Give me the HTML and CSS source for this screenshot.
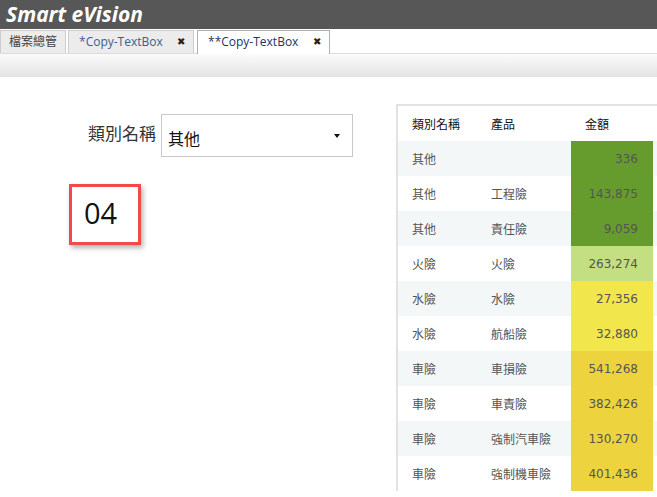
FILE: index.html
```html
<!DOCTYPE html>
<html>
<head>
    <title>Smart eVision</title>
    <link rel="stylesheet" href="styles.css">
</head>
<body>
    <div class="header">Smart eVision</div>
    <div class="tabs">
        <div class="tab">檔案總管</div>
        <div class="tab tab-doc">*Copy-TextBox <span class="close">&#10006;</span></div>
        <div class="tab tab-doc active">**Copy-TextBox <span class="close">&#10006;</span></div>
    </div>
    <div class="toolbar"></div>

    <div class="content">
        <div class="left">
            <div class="filter">
                <label class="filter-label">類別名稱</label>
                <div class="select">
                    <span>其他</span>
                    <span class="caret"></span>
                </div>
            </div>
            <div class="textbox">04</div>
        </div>

        <div class="grid">
            <table>
                <colgroup>
                    <col class="c1"><col class="c2"><col class="c3"><col class="c4">
                </colgroup>
                <thead>
                    <tr><th>類別名稱</th><th>產品</th><th>金額</th><th></th></tr>
                </thead>
                <tbody>
                    <tr><td>其他</td><td></td><td class="amt g1">336</td><td></td></tr>
                    <tr><td>其他</td><td>工程險</td><td class="amt g1">143,875</td><td></td></tr>
                    <tr><td>其他</td><td>責任險</td><td class="amt g1">9,059</td><td></td></tr>
                    <tr><td>火險</td><td>火險</td><td class="amt g2">263,274</td><td></td></tr>
                    <tr><td>水險</td><td>水險</td><td class="amt g3">27,356</td><td></td></tr>
                    <tr><td>水險</td><td>航船險</td><td class="amt g3">32,880</td><td></td></tr>
                    <tr><td>車險</td><td>車損險</td><td class="amt g4">541,268</td><td></td></tr>
                    <tr><td>車險</td><td>車責險</td><td class="amt g4">382,426</td><td></td></tr>
                    <tr><td>車險</td><td>強制汽車險</td><td class="amt g4">130,270</td><td></td></tr>
                    <tr><td>車險</td><td>強制機車險</td><td class="amt g4">401,436</td><td></td></tr>
                </tbody>
            </table>
        </div>
    </div>
</body>
</html>
```

FILE: styles.css
```css
html, body {
    margin: 0;
    height: 100%;
    overflow: hidden;
}
body {
    font-family: "Open Sans", "Noto Sans CJK TC", sans-serif;
    background-color: white;
    color: #333;
}
.header {
    height: 29px;
    line-height: 29px;
    background-color: #575757;
    color: white;
    font-size: 21px;
    font-weight: bold;
    font-style: italic;
    padding-left: 6px;
}
.tabs {
    display: flex;
    align-items: flex-end;
    height: 24px;
    border-bottom: 1px solid #dcdcdc;
}
.tab {
    box-sizing: border-box;
    height: 23px;
    line-height: 21px;
    font-size: 12px;
    padding: 0 8px;
    margin-right: 2px;
    background: #ececec;
    border: 1px solid #cdcdcd;
    border-bottom: none;
    color: #444;
}
.tab-doc {
    display: flex;
    color: #3a5f8c;
    padding: 0 8px 0 10px;
}
.tab:nth-child(2) {
    width: 126px;
}
.tab.active {
    background: white;
    border-color: #b0b0b0;
    color: #1c3560;
    width: 133px;
    margin-left: 1px;
    height: 24px;
    margin-bottom: -1px;
}
.close {
    margin-left: auto;
    font-size: 10px;
    color: #222;
}
.toolbar {
    height: 23px;
    background: linear-gradient(#fbfbfb, #e3e3e3);
}
.content {
    display: flex;
    align-items: flex-start;
}
.left {
    width: 396px;
    flex-shrink: 0;
}
.filter {
    display: flex;
    margin: 37px 0 0 88px;
}
.filter-label {
    font-size: 17px;
    color: #333;
    padding-top: 6px;
    margin-right: 5px;
    width: 68px;
    white-space: nowrap;
}
.select {
    box-sizing: border-box;
    width: 192px;
    height: 43px;
    border: 1px solid #c8c8c8;
    display: flex;
    align-items: center;
    padding: 4px 12px 0 6px;
    font-size: 16px;
    color: #111;
}
.caret {
    margin-left: auto;
    width: 0;
    height: 0;
    border-left: 3px solid transparent;
    border-right: 3px solid transparent;
    border-top: 4px solid #111;
    margin-top: -4px;
}
.textbox {
    box-sizing: border-box;
    width: 72px;
    height: 61px;
    margin: 27px 0 0 69px;
    border: 3px solid #f24a4a;
    box-shadow: 2px 3px 5px rgba(0, 0, 0, 0.3);
    font-size: 29px;
    color: #111;
    padding: 7px 0 0 12px;
    line-height: 38px;
}
.grid {
    margin-top: 27px;
    border-top: 2px solid #e2e2e2;
    border-left: 2px solid #e2e2e2;
}
table {
    border-collapse: collapse;
    table-layout: fixed;
    width: 259px;
    font-size: 12px;
}
.c1 { width: 79px; }
.c2 { width: 94px; }
.c3 { width: 82px; }
.c4 { width: 4px; }
th, td {
    height: 35px;
    padding: 0 0 0 14px;
    text-align: left;
    white-space: nowrap;
    overflow: hidden;
}
th:last-child, td:last-child {
    padding: 0;
}
th {
    font-weight: normal;
    color: #111;
}
td {
    color: #555;
}
tbody tr:nth-child(odd) {
    background: #f3f7f8;
}
.amt {
    text-align: right;
    padding: 0 15px 0 0;
    font-family: "DejaVu Sans", sans-serif;
    font-size: 12px;
}
.g1 { background: #669c2e; }
.g2 { background: #c4df82; }
.g3 { background: #f1e64b; }
.g4 { background: #edd33d; }
```
